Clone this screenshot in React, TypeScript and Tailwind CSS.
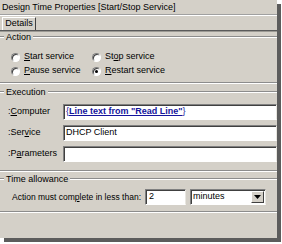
import type { ReactNode } from 'react'

const etched = 'h-[2px] border-t border-t-[#8c8c8c] border-b border-b-white'

function Group({ label, children }: { label: string; children: ReactNode }) {
  return (
    <div className="flex flex-col">
      <div className="flex items-center h-[10px]">
        <span className={`w-[4px] ${etched}`} />
        <span className="px-[2px] leading-[10px]">{label}</span>
        <span className={`flex-1 ${etched}`} />
      </div>
      {children}
      <div className={etched} />
    </div>
  )
}

function Radio({ checked = false, children }: { checked?: boolean; children: ReactNode }) {
  return (
    <div className="flex items-center gap-[4px]">
      <span className="w-[9px] h-[9px] rounded-full bg-white border border-t-[#808080] border-l-[#808080] border-b-white border-r-white shadow-[inset_1px_1px_0_#404040] flex items-center justify-center">
        {checked && <span className="w-[3px] h-[3px] rounded-full bg-black" />}
      </span>
      <span>{children}</span>
    </div>
  )
}

const sunken =
  'bg-white border border-t-[#808080] border-l-[#808080] border-b-white border-r-[#e8e6e0] shadow-[inset_1px_1px_0_#404040]'

function FieldRow({ label, children }: { label: ReactNode; children?: ReactNode }) {
  return (
    <div className="flex items-center h-[16px]">
      <span className="w-[63px] pl-[8px]">{label}</span>
      <div className={`flex-1 h-[16px] flex items-center pl-[2px] ${sunken}`}>{children}</div>
    </div>
  )
}

export default function App() {
  return (
    <div className="w-[282px] h-[244px] bg-white overflow-hidden font-['Liberation_Sans',Arial,sans-serif] text-[9px] text-black">
      <div className="w-[277px] h-[238px] bg-[#d4d0c8] shadow-[4px_4px_0_#5c5c5c] flex flex-col">
        {/* title */}
        <div className="h-[14px] leading-[14px] pl-[2px] whitespace-nowrap">Design Time Properties [Start/Stop Service]</div>
        <div className="h-[2px] border-t border-t-[#a0a0a0] border-b border-b-white" />

        {/* tab strip */}
        <div className="h-[14px] flex items-end">
          <div className="ml-[2px] w-[34px] h-[13px] border-l border-t border-white border-r border-r-[#404040] flex items-center justify-center">
            Details
          </div>
        </div>
        <div className="h-[2px] border-t border-t-[#5a5a5a] border-b border-b-[#9c9a94]" />

        {/* Action */}
        <Group label="Action">
          <div className="pt-[8px] pb-[4px] grid grid-cols-[81px_1fr] pl-[11px]">
            <div className="h-[14px] flex items-center"><Radio><span className="underline">S</span>tart service</Radio></div>
            <div className="h-[14px] flex items-center"><Radio>St<span className="underline">o</span>p service</Radio></div>
            <div className="h-[14px] flex items-center"><Radio><span className="underline">P</span>ause service</Radio></div>
            <div className="h-[14px] flex items-center"><Radio checked><span className="underline">R</span>estart service</Radio></div>
          </div>
        </Group>

        {/* Execution */}
        <div className="mt-[3px]">
          <Group label="Execution">
            <div className="pt-[7px] pb-[8px] flex flex-col gap-[5px]">
              <FieldRow label={<>:<span className="underline">C</span>omputer</>}>
                <span className="text-[#14149c] whitespace-nowrap">
                  {'{'}
                  <span className="font-bold underline">Line text from "Read Line"</span>
                  {'}'}
                </span>
              </FieldRow>
              <FieldRow label={<>:Ser<span className="underline">v</span>ice</>}>
                <span>DHCP Client</span>
              </FieldRow>
              <FieldRow label={<>:P<span className="underline">a</span>rameters</>} />
            </div>
          </Group>
        </div>

        {/* Time allowance */}
        <div className="mt-[2px]">
          <Group label="Time allowance">
            <div className="pt-[5px] pb-[6px] flex items-center">
              <span className="w-[145px] pl-[12px] whitespace-nowrap text-[8.5px]">
                Action must com<span className="underline">p</span>lete in less than:
              </span>
              <div className={`w-[41px] h-[16px] flex items-center pl-[3px] ${sunken}`}>2</div>
              <div className={`ml-[4px] w-[76px] h-[16px] flex items-center pl-[2px] pr-[1px] ${sunken}`}>
                <span className="flex-1">minutes</span>
                <span className="w-[13px] h-[12px] bg-[#d4d0c8] border border-t-white border-l-white border-b-[#404040] border-r-[#404040] flex items-center justify-center">
                  <svg width="7" height="4" viewBox="0 0 7 4">
                    <path d="M0 0h7L3.5 4z" fill="#000" />
                  </svg>
                </span>
              </div>
            </div>
          </Group>
        </div>
      </div>
    </div>
  )
}
